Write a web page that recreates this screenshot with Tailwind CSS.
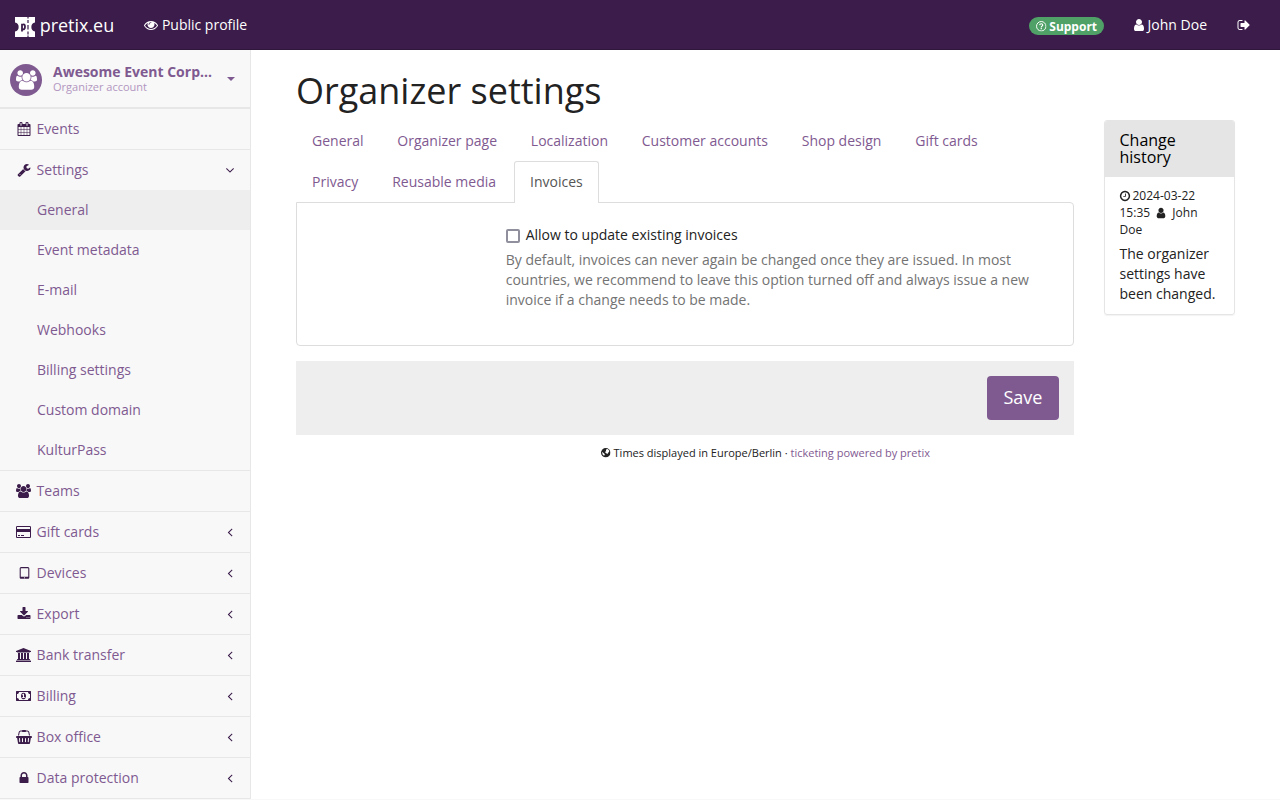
<!DOCTYPE html>
<html lang="en">
<head>
<meta charset="utf-8">
<title>Organizer settings</title>
<script src="https://cdn.jsdelivr.net/npm/@tailwindcss/browser@4"></script>
</head>
<body class="h-[800px] overflow-hidden bg-[#f8f8f8] font-['Open_Sans',sans-serif] text-sm leading-5 text-[#222222]">
<svg class="hidden">
  <symbol id="user" viewBox="0 0 1792 1792"><path d="M1536 1399q0 109-62.5 187t-150.5 78h-854q-88 0-150.5-78t-62.5-187q0-85 8.5-160.5t31.5-152 58.5-131 94-89 134.5-34.5q131 128 313 128t313-128q76 0 134.5 34.5t94 89 58.5 131 31.5 152 8.5 160.5zm-256-887q0 159-112.5 271.5t-271.5 112.5-271.5-112.5-112.5-271.5 112.5-271.5 271.5-112.5 271.5 112.5 112.5 271.5z"/></symbol>
  <symbol id="eye" viewBox="0 0 1792 1792"><path d="M1664 960q-152-236-381-353 61 104 61 225 0 185-131.5 316.5t-316.5 131.5-316.5-131.5-131.5-316.5q0-121 61-225-229 117-381 353 133 205 333.5 326.5t434.5 121.5 434.5-121.5 333.5-326.5zm-720-384q0-20-14-34t-34-14q-125 0-214.5 89.5t-89.5 214.5q0 20 14 34t34 14 34-14 14-34q0-86 61-147t147-61q20 0 34-14t14-34zm848 384q0 34-20 69-140 230-376.5 368.5t-499.5 138.5-499.5-139-376.5-368q-20-35-20-69t20-69q140-229 376.5-368t499.5-139 499.5 139 376.5 368q20 35 20 69z"/></symbol>
  <symbol id="wrench" viewBox="0 0 1792 1792"><path d="M448 1472q0-26-19-45t-45-19-45 19-19 45 19 45 45 19 45-19 19-45zm644-420l-682 682q-37 37-90 37-52 0-91-37l-106-108q-38-36-38-90 0-53 38-91l681-681q39 98 114.5 173.5t173.5 114.5zm634-435q0 39-23 106-47 134-164.5 217.5t-258.5 83.5q-185 0-316.5-131.5t-131.5-316.5 131.5-316.5 316.5-131.5q58 0 121.5 16.5t107.5 46.5q16 11 16 28t-16 28l-293 169v224l193 107q5-3 79-48.5t135.5-81 70.5-35.5q15 0 23.5 10t8.5 25z"/></symbol>
  <symbol id="calendar" viewBox="0 0 1792 1792"><path d="M192 1664h288v-288h-288v288zm352 0h320v-288h-320v288zm-352-352h288v-320h-288v320zm352 0h320v-320h-320v320zm-352-384h288v-288h-288v288zm736 736h320v-288h-320v288zm-384-736h320v-288h-320v288zm768 736h288v-288h-288v288zm-384-352h320v-320h-320v320zm-352-864v-288q0-13-9.5-22.5t-22.5-9.5h-64q-13 0-22.5 9.5t-9.5 22.5v288q0 13 9.5 22.5t22.5 9.5h64q13 0 22.5-9.5t9.5-22.5zm736 864h288v-320h-288v320zm-384-384h320v-288h-320v288zm384 0h288v-288h-288v288zm32-480v-288q0-13-9.5-22.5t-22.5-9.5h-64q-13 0-22.5 9.5t-9.5 22.5v288q0 13 9.5 22.5t22.5 9.5h64q13 0 22.5-9.5t9.5-22.5zm384-64v1280q0 52-38 90t-90 38h-1408q-52 0-90-38t-38-90v-1280q0-52 38-90t90-38h128v-96q0-66 47-113t113-47h64q66 0 113 47t47 113v96h384v-96q0-66 47-113t113-47h64q66 0 113 47t47 113v96h128q52 0 90 38t38 90z"/></symbol>
  <symbol id="signout" viewBox="0 0 1792 1792"><path d="M704 1440q0 4 1 20t.5 26.5-3 23.5-10 19.5-20.5 6.5h-320q-119 0-203.5-84.5t-84.5-203.5v-704q0-119 84.5-203.5t203.5-84.5h320q13 0 22.5 9.5t9.5 22.5q0 4 1 20t.5 26.5-3 23.5-10 19.5-20.5 6.5h-320q-66 0-113 47t-47 113v704q0 66 47 113t113 47h312l11.5 1 11.5 3 8 5.5 7 9 2 13.5zm928-544q0 26-19 45l-544 544q-19 19-45 19t-45-19-19-45v-288h-448q-26 0-45-19t-19-45v-384q0-26 19-45t45-19h448v-288q0-26 19-45t45-19 45 19l544 544q19 19 19 45z"/></symbol>
  <symbol id="lock" viewBox="0 0 1792 1792"><path d="M640 768h512v-192q0-106-75-181t-181-75-181 75-75 181v192zm832 96v576q0 40-28 68t-68 28h-960q-40 0-68-28t-28-68v-576q0-40 28-68t68-28h32v-192q0-184 132-316t316-132 316 132 132 316v192h32q40 0 68 28t28 68z"/></symbol>
  <symbol id="download" viewBox="0 0 1792 1792"><path d="M1344 1344q0-26-19-45t-45-19-45 19-19 45 19 45 45 19 45-19 19-45zm256 0q0-26-19-45t-45-19-45 19-19 45 19 45 45 19 45-19 19-45zm128-224v320q0 40-28 68t-68 28h-1472q-40 0-68-28t-28-68v-320q0-40 28-68t68-28h465l135 136q58 56 136 56t136-56l136-136h464q40 0 68 28t28 68zm-325-569q17 41-14 70l-448 448q-18 19-45 19t-45-19l-448-448q-31-29-14-70 17-39 59-39h256v-448q0-26 19-45t45-19h256q26 0 45 19t19 45v448h256q42 0 59 39z"/></symbol>
  <symbol id="clock" viewBox="0 0 1792 1792"><path d="M1024 544v448q0 14-9 23t-23 9h-320q-14 0-23-9t-9-23v-64q0-14 9-23t23-9h224v-352q0-14 9-23t23-9h64q14 0 23 9t9 23zm416 352q0-148-73-273t-198-198-273-73-273 73-198 198-73 273 73 273 198 198 273 73 273-73 198-198 73-273zm224 0q0 209-103 385.5t-279.5 279.5-385.5 103-385.5-103-279.5-279.5-103-385.5 103-385.5 279.5-279.5 385.5-103 385.5 103 279.5 279.5 103 385.5z"/></symbol>
  <symbol id="users" viewBox="64 0 1920 1792"><path d="M657 896q-162 5-265 128h-134q-82 0-138-40.5t-56-118.5q0-353 124-353 6 0 43.5 21t97.5 42.5 119 21.5q67 0 133-23-5 37-5 66 0 139 81 256zm1071 637q0 120-73 189.5t-194 69.5h-874q-121 0-194-69.5t-73-189.5q0-53 3.5-103.5t14-109 26.5-108.5 43-97.5 62-81 85.5-53.5 111.5-20q10 0 43 21.5t73 48 107 48 135 21.5 135-21.5 107-48 73-48 43-21.5q61 0 111.5 20t85.5 53.5 62 81 43 97.5 26.5 108.5 14 109 3.5 103.5zm-1024-1277q0 106-75 181t-181 75-181-75-75-181 75-181 181-75 181 75 75 181zm704 384q0 159-112.5 271.5t-271.5 112.5-271.5-112.5-112.5-271.5 112.5-271.5 271.5-112.5 271.5 112.5 112.5 271.5zm576 225q0 78-56 118.5t-138 40.5h-134q-103-123-265-128 81-117 81-256 0-29-5-66 66 23 133 23 59 0 119-21.5t97.5-42.5 43.5-21q124 0 124 353zm-128-609q0 106-75 181t-181 75-181-75-75-181 75-181 181-75 181 75 75 181z"/></symbol>
  <symbol id="bank" viewBox="0 0 1920 1792"><path d="M960 0l960 384v128h-128q0 26-20.5 45t-48.5 19h-1526q-28 0-48.5-19t-20.5-45h-128v-128zm-704 640h256v768h128v-768h256v768h128v-768h256v768h128v-768h256v768h59q28 0 48.5 19t20.5 45v64h-1664v-64q0-26 20.5-45t48.5-19h59v-768zm1595 960q28 0 48.5 19t20.5 45v128h-1920v-128q0-26 20.5-45t48.5-19h1782z"/></symbol>
  <symbol id="card" viewBox="0 0 1920 1792"><path d="M1760 128q66 0 113 47t47 113v1216q0 66-47 113t-113 47h-1600q-66 0-113-47t-47-113v-1216q0-66 47-113t113-47h1600zm-1600 128q-13 0-22.5 9.5t-9.5 22.5v224h1664v-224q0-13-9.5-22.5t-22.5-9.5h-1600zm1600 1280q13 0 22.5-9.5t9.5-22.5v-608h-1664v608q0 13 9.5 22.5t22.5 9.5h1600zm-1504-128v-128h256v128h-256zm384 0v-128h384v128h-384z"/></symbol>
  <symbol id="money" viewBox="0 0 1920 1792"><path d="M768 1152h384v-96h-128v-448h-114l-148 137 77 80q42-37 55-57h2v288h-128v96zm512-256q0 70-21 142t-59.5 134-101.5 101-138 39-138-39-101.5-101-59.5-134-21-142 21-142 59.5-134 101.5-101 138-39 138 39 101.5 101 59.5 134 21 142zm512 256v-512q-106 0-181-75t-75-181h-1152q0 106-75 181t-181 75v512q106 0 181 75t75 181h1152q0-106 75-181t181-75zm128-832v1152q0 26-19 45t-45 19h-1792q-26 0-45-19t-19-45v-1152q0-26 19-45t45-19h1792q26 0 45 19t19 45z"/></symbol>
  <symbol id="tablet" viewBox="0 0 1792 1792"><path d="M960 1408q0-26-19-45t-45-19-45 19-19 45 19 45 45 19 45-19 19-45zm384-160v-960q0-13-9.5-22.5t-22.5-9.5h-832q-13 0-22.5 9.5t-9.5 22.5v960q0 13 9.5 22.5t22.5 9.5h832q13 0 22.5-9.5t9.5-22.5zm128-960v1088q0 66-47 113t-113 47h-832q-66 0-113-47t-47-113v-1088q0-66 47-113t113-47h832q66 0 113 47t47 113z"/></symbol>
  <symbol id="basket" viewBox="0 0 2048 1792"><path d="M1920 768q53 0 90.5 37.5t37.5 90.5-37.5 90.5-90.5 37.5h-15l-115 662q-8 46-44 76t-82 30h-1280q-46 0-82-30t-44-76l-115-662h-15q-53 0-90.5-37.5t-37.5-90.5 37.5-90.5 90.5-37.5h1792zm-1435 800q26-2 43.5-22.5t15.5-46.5l-32-416q-2-26-22.5-43.5t-46.5-15.5-43.5 22.5-15.5 46.5l32 416q2 25 20.5 42t43.5 17h5zm411-64v-416q0-26-19-45t-45-19-45 19-19 45v416q0 26 19 45t45 19 45-19 19-45zm384 0v-416q0-26-19-45t-45-19-45 19-19 45v416q0 26 19 45t45 19 45-19 19-45zm352 5l32-416q2-26-15.5-46.5t-43.5-22.5-46.5 15.5-22.5 43.5l-32 416q-2 26 15.5 46.5t43.5 22.5h5q25 0 43.5-17t20.5-42zm-1156-1217l-93 412h-132l101-441q19-88 89-143.5t160-55.5h167q0-26 19-45t45-19h384q26 0 45 19t19 45h167q90 0 160 55.5t89 143.5l101 441h-132l-93-412q-11-44-45.5-72t-79.5-28h-167q0 26-19 45t-45 19h-384q-26 0-45-19t-19-45h-167q-45 0-79.5 28t-45.5 72z"/></symbol>
  <symbol id="left" viewBox="0 0 1792 1792"><path d="M1203 544q0 13-10 23l-393 393 393 393q10 10 10 23t-10 23l-50 50q-10 10-23 10t-23-10l-466-466q-10-10-10-23t10-23l466-466q10-10 23-10t23 10l50 50q10 10 10 23z"/></symbol>
  <symbol id="down" viewBox="0 0 1792 1792"><path d="M1395 736q0 13-10 23l-466 466q-10 10-23 10t-23-10l-466-466q-10-10-10-23t10-23l50-50q10-10 23-10t23 10l393 393 393-393q10-10 23-10t23 10l50 50q10 10 10 23z"/></symbol>
  <symbol id="help" viewBox="0 0 12 12"><g fill="none" stroke="currentColor"><circle cx="6" cy="6" r="5.4" stroke-width="1.1"/><path d="M4.2 4.7C4.4 2.6 7.7 2.7 7.7 4.6 7.7 5.9 6 5.8 6 7.3" stroke-width="1.35"/><path d="M6 8v1.3" stroke-width="1.4"/></g></symbol>
  <symbol id="globe" viewBox="0 0 12 12"><circle cx="6" cy="6" r="6"/><g fill="#fff"><path d="M6.8 1.6 8.4 1.3 10 2.8 10.4 4.4 9.3 5.6 8.6 7 7.6 7.6 6.9 6.6 5.6 6 5.2 4.8 6.6 4 6.2 2.8z"/><path d="M1.3 4.6 2.4 5.6 3.6 6.6 4.8 7.8 4.4 9.4 3.4 9.6 2 8.2z"/></g></symbol>
</svg>

<header class="flex h-[50px] items-center border-b border-[#2f163b] bg-[#3b1c4a] text-white">
  <a class="flex items-center pl-[15px] text-lg leading-5">
    <svg class="mr-[5px] mt-[4px] size-5" viewBox="0 0 20 20"><path fill="#fff" d="M0 0H12.4V1.5H13.6V0H20V5.5A4.6 4.6 0 0 0 20 14.5V20H13.6V18.5H12.4V20H0V14.5A4.6 4.6 0 0 0 0 5.5Z"/><g fill="none" stroke="#3b1c4a"><path d="M7 6.8V14.6M7 8Q10 6.2 10 9.6 10 13.2 7 12" stroke-width="1.8"/><path d="M13 3v3M13 8v4.5M13 14.5v3" stroke-width="1.2"/></g></svg>
    <span class="-ml-[.3px] tracking-[-0.03px]">pretix.eu</span>
  </a>
  <a class="ml-[30px] flex items-center"><svg class="mr-1 size-3.5 fill-current"><use href="#eye"/></svg><span class="-ml-[.3px]">Public profile</span></a>
  <div class="ml-auto flex items-center">
    <a class="mt-[3px] flex h-[18px] items-center rounded-full bg-[#50a167] px-[7px] pt-px text-xs font-bold"><svg class="mr-[2.5px] size-[10.5px]"><use href="#help"/></svg>Support</a>
    <a class="ml-[28px] flex items-center"><svg class="size-3.5 fill-current"><use href="#user"/></svg><span class="ml-[1.5px]">John Doe</span></a>
    <a class="mr-[29.5px] ml-[29.5px]"><svg class="size-3.5 fill-current"><use href="#signout"/></svg></a>
  </div>
</header>

<div class="flex h-[749px]">
  <nav class="w-[251px] shrink-0 border-r border-[#e7e7e7] bg-[#f8f8f8] text-[#7f5a91] [&_svg]:fill-[#3b1c4a]">
    <div class="flex h-[59px] items-center border-b-2 border-[#e7e7e7] pl-[10px]">
      <span class="mt-[2px] flex size-8 items-center justify-center rounded-full bg-[#7f5a91]"><svg class="h-5 w-[21px] !fill-white"><use href="#users"/></svg></span>
      <div class="ml-[11px] w-[174px]"><div class="text-sm leading-[15px] font-bold">Awesome Event Corp…</div><div class="text-[11px] leading-[15px] text-[#b296c0]">Organizer account</div></div>
      <span class="border-x-4 border-t-4 border-x-transparent border-t-[#7f5a91]"></span>
    </div>
    <a class="flex h-[41px] items-center border-b border-[#e7e7e7] pl-[15px]"><span class="mr-[3.6px] flex w-[18px] justify-center"><svg class="size-3.5"><use href="#calendar"/></svg></span>Events</a>
    <div class="border-b border-[#e7e7e7]">
      <a class="flex h-10 items-center pr-[13px] pl-[15px]"><span class="mr-[3.6px] flex w-[18px] justify-center"><svg class="size-3.5"><use href="#wrench"/></svg></span>Settings<svg class="ml-auto size-3.5"><use href="#down"/></svg></a>
      <a class="flex h-10 items-center bg-[#eeeeee] pl-[37px]">General</a>
      <a class="flex h-10 items-center pl-[37px]">Event metadata</a>
      <a class="flex h-10 items-center pl-[37px]">E-mail</a>
      <a class="flex h-10 items-center pl-[37px]">Webhooks</a>
      <a class="flex h-10 items-center pl-[37px]">Billing settings</a>
      <a class="flex h-10 items-center pl-[37px]">Custom domain</a>
      <a class="flex h-10 items-center pl-[37px]">KulturPass</a>
    </div>
    <a class="flex h-[41px] items-center border-b border-[#e7e7e7] pl-[15px]"><span class="mr-[3.6px] flex w-[18px] pl-px"><svg class="h-3.5 w-[15px]"><use href="#users"/></svg></span>Teams</a>
    <a class="flex h-[41px] items-center border-b border-[#e7e7e7] pr-[13px] pl-[15px]"><span class="mr-[3.6px] flex w-[18px] pl-px"><svg class="h-3.5 w-[15px]"><use href="#card"/></svg></span>Gift cards<svg class="ml-auto size-3.5"><use href="#left"/></svg></a>
    <a class="flex h-[41px] items-center border-b border-[#e7e7e7] pr-[13px] pl-[15px]"><span class="mr-[3.6px] flex w-[18px] justify-center"><svg class="size-[15px]"><use href="#tablet"/></svg></span>Devices<svg class="ml-auto size-3.5"><use href="#left"/></svg></a>
    <a class="flex h-[41px] items-center border-b border-[#e7e7e7] pr-[13px] pl-[15px]"><span class="mr-[3.6px] flex w-[18px] justify-center"><svg class="size-3.5"><use href="#download"/></svg></span>Export<svg class="ml-auto size-3.5"><use href="#left"/></svg></a>
    <a class="flex h-[41px] items-center border-b border-[#e7e7e7] pr-[13px] pl-[15px]"><span class="mr-[3.6px] flex w-[18px] pl-px"><svg class="h-3.5 w-[15px]"><use href="#bank"/></svg></span>Bank transfer<svg class="ml-auto size-3.5"><use href="#left"/></svg></a>
    <a class="flex h-[41px] items-center border-b border-[#e7e7e7] pr-[13px] pl-[15px]"><span class="mr-[3.6px] flex w-[18px] pl-px"><svg class="h-3.5 w-[15px]"><use href="#money"/></svg></span>Billing<svg class="ml-auto size-3.5"><use href="#left"/></svg></a>
    <a class="flex h-[41px] items-center border-b border-[#e7e7e7] pr-[13px] pl-[15px]"><span class="mr-[3.6px] flex w-[18px] justify-center"><svg class="h-3.5 w-4"><use href="#basket"/></svg></span>Box office<svg class="ml-auto size-3.5"><use href="#left"/></svg></a>
    <a class="flex h-[41px] items-center border-b border-[#e7e7e7] pr-[13px] pl-[15px]"><span class="mr-[3.6px] flex w-[18px] justify-center"><svg class="size-3.5"><use href="#lock"/></svg></span>Data protection<svg class="ml-auto size-3.5"><use href="#left"/></svg></a>
  </nav>

  <main class="flex-1 bg-white pt-5 pr-[45px] pl-[45px]">
    <h1 class="mb-[9px] text-[36px] leading-[41px]">Organizer settings</h1>
    <div class="flex items-start gap-[30px]">
      <div class="w-[778px]">
        <div class="flex flex-wrap text-[#7f5a91]">
          <a class="mr-[1.8px] px-4 py-[11px] -mb-px">General</a>
          <a class="mr-[1.8px] px-4 py-[11px] -mb-px">Organizer page</a>
          <a class="mr-[1.8px] px-4 py-[11px] -mb-px">Localization</a>
          <a class="mr-[1.8px] px-4 py-[11px] -mb-px">Customer accounts</a>
          <a class="mr-[1.8px] px-4 py-[11px] -mb-px">Shop design</a>
          <a class="mr-[60px] px-4 py-[11px] -mb-px">Gift cards</a>
          <a class="mr-[2px] px-4 py-[11px] -mb-px">Privacy</a>
          <a class="mr-[2px] px-4 py-[11px] -mb-px">Reusable media</a>
          <a class="relative z-10 -mb-px rounded-t-[3px] border border-b-0 border-[#dddddd] bg-white px-[15px] pt-[10px] pb-[11px] text-[#555555]">Invoices</a>
        </div>
        <div class="h-[144px] rounded-b-[4px] rounded-tr-[4px] border border-[#dddddd] pt-[22px] pl-[208.7px]">
          <label class="flex items-center"><span class="mt-[2px] mr-[6px] size-[14px] rounded-[2px] border-2 border-[#8f8f9d] bg-white"></span>Allow to update existing invoices</label>
          <p class="mt-[5px] w-[540px] text-[#737373]">By default, invoices can never again be changed once they are issued. In most countries, we recommend to leave this option turned off and always issue a new invoice if a change needs to be made.</p>
        </div>
        <div class="mt-[15px] flex h-[74px] items-center justify-end bg-[#eeeeee] pr-[15px]">
          <button class="h-11 w-[72px] rounded-[4px] bg-[#7f5a91] pb-[2px] text-lg text-white">Save</button>
        </div>
      </div>
      <aside class="w-[131px] overflow-hidden rounded-[3px] border border-[#e5e5e5] shadow-[0_1px_1px_rgba(0,0,0,0.05)]">
        <h3 class="bg-[#e5e5e5] px-[14.5px] pt-[11px] pb-[11px] text-base leading-[17px] text-black">Change history</h3>
        <div class="px-[14.5px] pt-[10px] pb-[10px]">
          <p class="text-xs leading-[17px]"><svg class="-ml-px mr-[2px] inline size-3 fill-current align-[-2px]"><use href="#clock"/></svg>2024-03-22<br>15:35 <svg class="mx-[2px] inline size-3 fill-current align-[-2px]"><use href="#user"/></svg> John<br>Doe</p>
          <p class="mt-[6px]">The organizer settings have been changed.</p>
        </div>
      </aside>
    </div>
    <footer class="mt-[8px] flex h-5 items-center justify-center text-[11px]"><svg class="mr-[3px] size-[9.5px] fill-current"><use href="#globe"/></svg>Times displayed in Europe/Berlin ·&nbsp;<a class="text-[#7f5a91]">ticketing powered by pretix</a></footer>
  </main>
</div>
</body>
</html>
